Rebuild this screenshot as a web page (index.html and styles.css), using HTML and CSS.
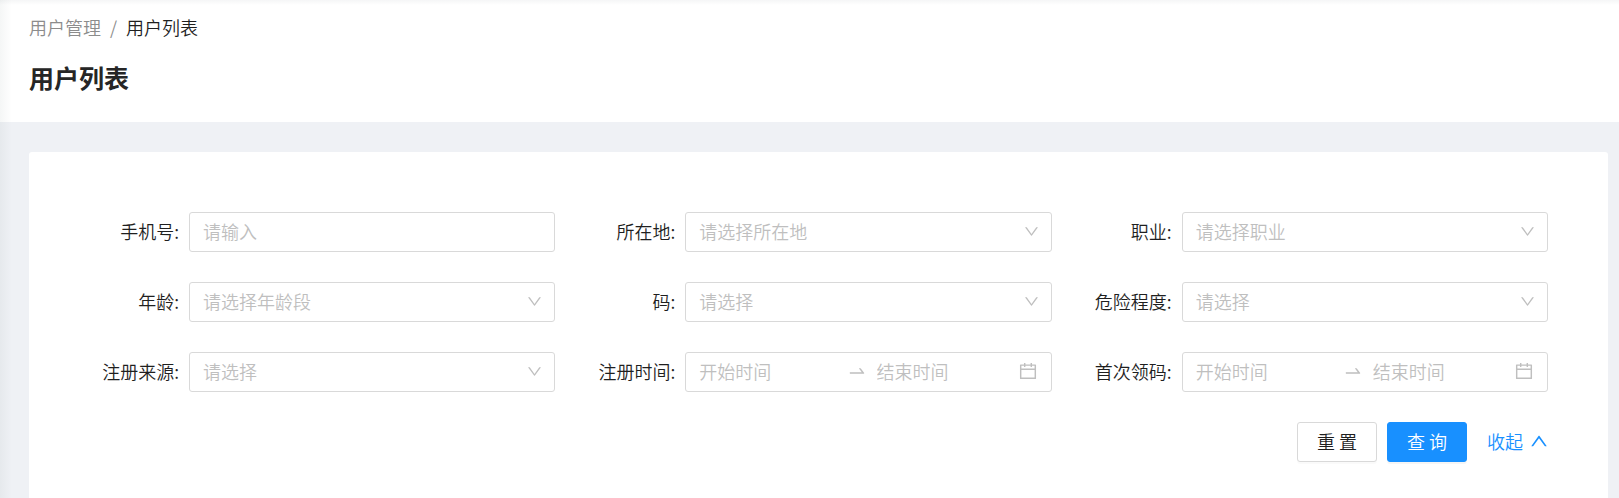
FILE: index.html
```html
<!DOCTYPE html>
<html lang="zh-CN">
<head>
<meta charset="utf-8">
<meta name="viewport" content="width=device-width, initial-scale=1">
<title>用户列表</title>
<link rel="stylesheet" href="styles.css">
</head>
<body>
<svg class="sprite" aria-hidden="true">
  <symbol id="icon-down" viewBox="64 64 896 896"><path d="M884 256h-75c-5.100 0-9.900 2.500-12.900 6.600L512 654.200 227.900 262.600c-3-4.100-7.800-6.600-12.900-6.600h-75c-6.500 0-10.300 7.400-6.500 12.700l352.600 486.100c12.800 17.600 39 17.600 51.700 0l352.600-486.100c3.900-5.300.1-12.700-6.400-12.700z"/></symbol>
  <symbol id="icon-calendar" viewBox="64 64 896 896"><path d="M880 184H712v-64c0-4.400-3.600-8-8-8h-56c-4.400 0-8 3.600-8 8v64H384v-64c0-4.400-3.600-8-8-8h-56c-4.400 0-8 3.600-8 8v64H144c-17.700 0-32 14.300-32 32v664c0 17.700 14.300 32 32 32h736c17.700 0 32-14.300 32-32V216c0-17.700-14.300-32-32-32zm-40 656H184V460h656v380zM184 392V256h128v48c0 4.400 3.600 8 8 8h56c4.400 0 8-3.600 8-8v-48h256v48c0 4.400 3.600 8 8 8h56c4.400 0 8-3.600 8-8v-48h128v136z"/></symbol>
  <symbol id="icon-swap" viewBox="0 0 1024 1024"><path d="M873.100 596.200l-164-208A32 32 0 0 0 684 376h-64.800c-6.700 0-10.400 7.700-6.300 13l144.300 183H152c-4.400 0-8 3.600-8 8v60c0 4.400 3.600 8 8 8h695.900c26.800 0 41.700-30.800 25.200-51.800z"/></symbol>
</svg>
<div class="layout">
  <header class="page-header">
    <nav class="breadcrumb" aria-label="面包屑">
      <a class="breadcrumb-link" href="#">用户管理</a>
      <span class="breadcrumb-separator">/</span>
      <span>用户列表</span>
    </nav>
    <h1 class="page-title">用户列表</h1>
  </header>
  <main class="content">
    <form class="search-form">
      <div class="field">
        <label class="label" for="phone">手机号:</label>
        <input class="control" id="phone" type="text" placeholder="请输入">
      </div>
      <div class="field">
        <label class="label" for="location">所在地:</label>
        <div class="select-wrap">
          <select class="control select" id="location"><option>请选择所在地</option></select>
          <svg class="chevron"><use href="#icon-down"/></svg>
        </div>
      </div>
      <div class="field">
        <label class="label" for="job">职业:</label>
        <div class="select-wrap">
          <select class="control select" id="job"><option>请选择职业</option></select>
          <svg class="chevron"><use href="#icon-down"/></svg>
        </div>
      </div>
      <div class="field">
        <label class="label" for="age">年龄:</label>
        <div class="select-wrap">
          <select class="control select" id="age"><option>请选择年龄段</option></select>
          <svg class="chevron"><use href="#icon-down"/></svg>
        </div>
      </div>
      <div class="field">
        <label class="label" for="code">码:</label>
        <div class="select-wrap">
          <select class="control select" id="code"><option>请选择</option></select>
          <svg class="chevron"><use href="#icon-down"/></svg>
        </div>
      </div>
      <div class="field">
        <label class="label" for="risk">危险程度:</label>
        <div class="select-wrap">
          <select class="control select" id="risk"><option>请选择</option></select>
          <svg class="chevron"><use href="#icon-down"/></svg>
        </div>
      </div>
      <div class="field">
        <label class="label" for="source">注册来源:</label>
        <div class="select-wrap">
          <select class="control select" id="source"><option>请选择</option></select>
          <svg class="chevron"><use href="#icon-down"/></svg>
        </div>
      </div>
      <div class="field">
        <label class="label" for="register-start">注册时间:</label>
        <div class="control range">
          <input class="range-input" id="register-start" type="text" placeholder="开始时间">
          <svg class="swap"><use href="#icon-swap"/></svg>
          <input class="range-input" type="text" placeholder="结束时间" aria-label="注册结束时间">
          <svg class="calendar"><use href="#icon-calendar"/></svg>
        </div>
      </div>
      <div class="field">
        <label class="label" for="first-start">首次领码:</label>
        <div class="control range">
          <input class="range-input" id="first-start" type="text" placeholder="开始时间">
          <svg class="swap"><use href="#icon-swap"/></svg>
          <input class="range-input" type="text" placeholder="结束时间" aria-label="领码结束时间">
          <svg class="calendar"><use href="#icon-calendar"/></svg>
        </div>
      </div>
      <div class="actions">
        <button class="button" type="reset">重 置</button>
        <button class="button button-primary" type="submit">查 询</button>
        <a class="collapse" href="#">收起<svg class="collapse-icon"><use href="#icon-down"/></svg></a>
      </div>
    </form>
  </main>
</div>
</body>
</html>
```
FILE: styles.css
```css
* {
  box-sizing: border-box;
}

body {
  margin: 0;
  background: #f0f2f5;
  color: #1f1f1f;
  font-family: "Noto Sans CJK SC", sans-serif;
  font-size: 18px;
  font-weight: 350;
  line-height: 28px;
}

input,
select,
button {
  font: inherit;
}

a {
  text-decoration: none;
}

svg {
  display: block;
  flex: none;
  fill: currentColor;
}

.sprite {
  position: absolute;
  width: 0;
  height: 0;
}

.layout {
  position: relative;
  min-height: 100vh;
  background: #eff1f5;
}

.layout::before,
.layout::after {
  content: "";
  position: absolute;
  top: 0;
  left: 0;
  pointer-events: none;
}

.layout::before {
  bottom: 0;
  width: 12px;
  background: linear-gradient(to right, rgba(0, 41, 31, 0.04), rgba(0, 41, 31, 0));
}

.layout::after {
  right: 0;
  height: 5px;
  background: linear-gradient(to bottom, rgba(0, 21, 41, 0.04), rgba(0, 21, 41, 0));
}

.page-header {
  padding: 13px 29px 25px;
  background: #fff;
}

.breadcrumb {
  display: flex;
  gap: 9px;
}

.breadcrumb-link,
.breadcrumb-separator {
  color: #8c8c8c;
}

.page-title {
  margin: 16px 0 0;
  color: #262626;
  font-size: 25px;
  font-weight: 700;
  line-height: 40px;
}

.content {
  padding: 30px 11px 0 29px;
}

.search-form {
  display: grid;
  grid-template-columns: repeat(3, minmax(0, 1fr));
  gap: 30px;
  padding: 60px 60px 36px;
  border-radius: 3px 3px 0 0;
  background: #fff;
}

.field {
  display: grid;
  grid-template-columns: 100px minmax(0, 1fr);
  align-items: center;
}

.label {
  padding: 0 10px 2px 0;
  text-align: right;
  white-space: nowrap;
}

.control {
  width: 100%;
  height: 40px;
  padding: 0 14px 2px 13px;
  border: 1px solid #d9d9d9;
  border-radius: 3px;
  outline: none;
  background: #fff;
  color: #bfbfbf;
}

.control::placeholder,
.range-input::placeholder {
  color: #bfbfbf;
  opacity: 1;
}

.select-wrap {
  position: relative;
}

.select {
  display: block;
  appearance: none;
}

.chevron {
  position: absolute;
  top: 12px;
  right: 13px;
  width: 15px;
  height: 15px;
  color: #bfbfbf;
  pointer-events: none;
}

.range {
  display: flex;
  align-items: center;
}

.range-input {
  flex: 1;
  min-width: 0;
  padding: 0;
  border: 0;
  outline: none;
  background: transparent;
}

.swap {
  width: 20px;
  height: 20px;
  margin: 0 10px;
}

.calendar {
  width: 18px;
  height: 18px;
  margin-left: 5px;
}

.actions {
  grid-column: 1 / -1;
  display: flex;
  justify-content: flex-end;
  align-items: center;
  gap: 10px;
}

.button {
  width: 80px;
  height: 40px;
  padding: 0 0 2px;
  border: 1px solid #d9d9d9;
  border-radius: 3px;
  background: #fff;
  box-shadow: 0 2px 0 rgba(0, 0, 0, 0.02);
  color: #1f1f1f;
}

.button-primary {
  border-color: #1890ff;
  background: #1890ff;
  box-shadow: 0 2px 0 rgba(0, 0, 0, 0.04);
  color: #fff;
}

.collapse {
  display: flex;
  align-items: center;
  gap: 7px;
  margin-left: 10px;
  padding-bottom: 2px;
  color: #1890ff;
}

.collapse-icon {
  width: 18px;
  height: 18px;
  transform: rotate(180deg);
}
```
